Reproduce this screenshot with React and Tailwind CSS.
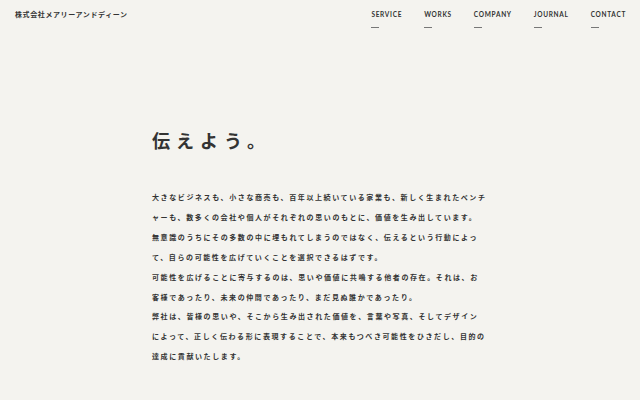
export default function App() {
  const jp = { fontFamily: '"Noto Sans CJK JP", "Noto Sans", sans-serif' };
  const nav = ["SERVICE", "WORKS", "COMPANY", "JOURNAL", "CONTACT"];
  const paras = [
    [
      "大きなビジネスも、小さな商売も、百年以上続いている家業も、新しく生まれたベンチ",
      "ャーも、数多くの会社や個人がそれぞれの思いのもとに、価値を生み出しています。",
    ],
    [
      "無意識のうちにその多数の中に埋もれてしまうのではなく、伝えるという行動によっ",
      "て、自らの可能性を広げていくことを選択できるはずです。",
    ],
    [
      "可能性を広げることに寄与するのは、思いや価値に共鳴する他者の存在。それは、お",
      "客様であったり、未来の仲間であったり、まだ見ぬ誰かであったり。",
    ],
    [
      "弊社は、皆様の思いや、そこから生み出された価値を、言葉や写真、そしてデザイン",
      "によって、正しく伝わる形に表現することで、本来もつべき可能性をひきだし、目的の",
      "達成に貢献いたします。",
    ],
  ];
  return (
    <div className="w-[640px] h-[400px] bg-[#f4f3ef] text-[#333] overflow-hidden" style={jp}>
      <header className="flex justify-between items-start pl-[15px] pr-[14px] pt-[9px]">
        <div className="text-[7px] font-bold tracking-[0.6px] leading-[10px]">
          株式会社メアリーアンドディーン
        </div>
        <nav className="flex gap-[22px] mt-[1px]">
          {nav.map((n) => (
            <div key={n} className="flex flex-col">
              <span
                className="text-[6.5px] font-bold tracking-[0.7px] leading-[10px]"
                style={{ fontFamily: 'Lato, "Noto Sans", sans-serif' }}
              >
                {n}
              </span>
              <span className="mt-[7px] w-[8px] h-px bg-[#777]" />
            </div>
          ))}
        </nav>
      </header>
      <main className="pl-[152px] pt-[100px]">
        <h1 className="text-[18px] font-bold tracking-[6px] leading-[24px]">伝えよう。</h1>
        <div className="mt-[36px] text-[7px] font-bold tracking-[1.6px] leading-[19.9px]">
          {paras.map((p, i) => (
            <p key={i}>
              {p.map((l, j) => (
                <span key={j} className="block whitespace-nowrap">
                  {l}
                </span>
              ))}
            </p>
          ))}
        </div>
      </main>
    </div>
  );
}
